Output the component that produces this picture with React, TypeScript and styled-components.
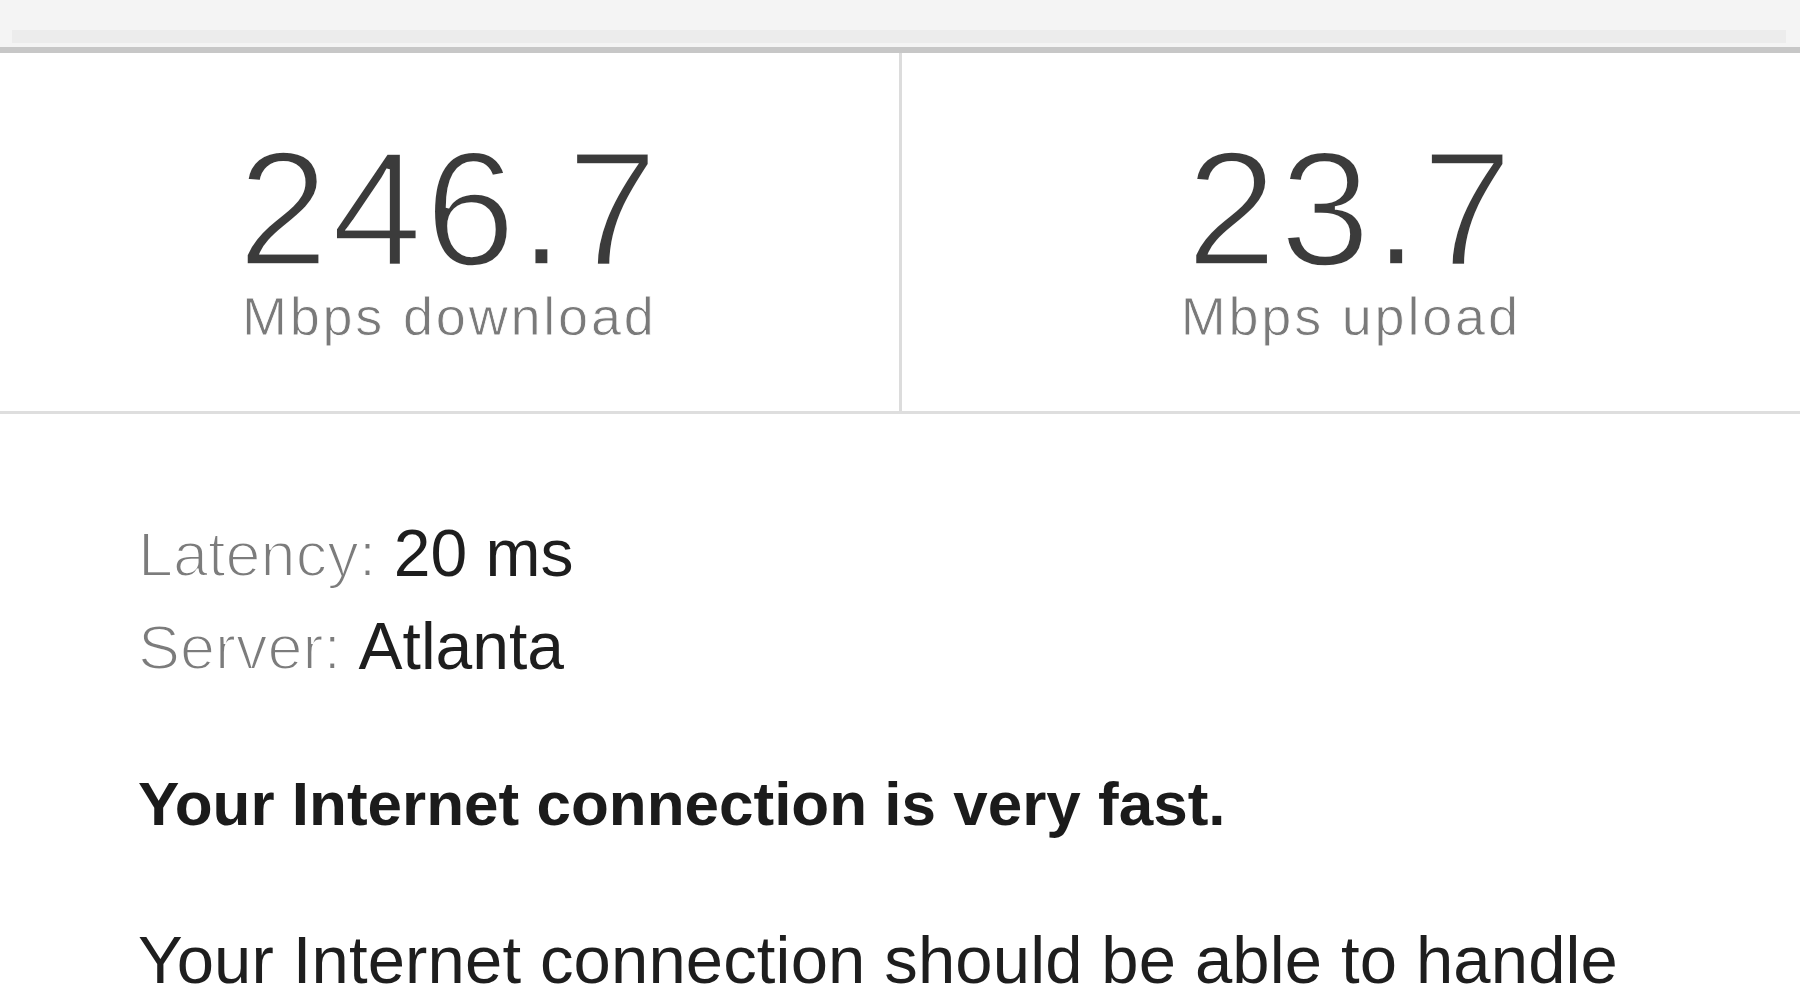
import styled, { createGlobalStyle } from "styled-components";

const GlobalStyle = createGlobalStyle`
    html, body {
        margin: 0;
        padding: 0;
        background: #fff;
    }
    body {
        font-family: "Liberation Sans", Arial, Helvetica, sans-serif;
        color: #1e1e1e;
        overflow: hidden;
    }
`;

const TopBar = styled.header`
    height: 47px;
    background: #f4f4f4;
    border-bottom: 6px solid #c7c7c7;
    display: flex;
    flex-direction: column;
    justify-content: flex-end;
`;

const AddressStrip = styled.div`
    height: 13px;
    margin: 0 14px 4px 12px;
    background: #ececec;
`;

const Stats = styled.section`
    display: grid;
    grid-template-columns: 1fr 3px 1fr;
    border-bottom: 3px solid #dedede;
`;

const Divider = styled.div`
    background: #dcdcdc;
`;

const Stat = styled.div`
    height: 358px;
    padding-top: 83px;
    box-sizing: border-box;
    display: flex;
    flex-direction: column;
    align-items: center;
`;

const StatValue = styled.div`
    font-size: 163px;
    line-height: 0.9;
    letter-spacing: 3px;
    color: #3b3b3b;
    -webkit-text-stroke: 3.5px #fff;
`;

const StatLabel = styled.div`
    margin-top: 8px;
    font-size: 54px;
    line-height: 50px;
    letter-spacing: 2.8px;
    color: #7a7a7a;
    -webkit-text-stroke: 0.8px #fff;
`;

const Info = styled.section`
    padding: 93px 0 0 138px;
`;

const MetaRow = styled.div`
    font-size: 63px;
    line-height: 92px;
    white-space: nowrap;
`;

const MetaLabel = styled.span`
    color: #7c7c7c;
    -webkit-text-stroke: 2px #fff;
`;

const MetaValue = styled.span`
    font-size: 66px;
    color: #1e1e1e;
`;

const Verdict = styled.p`
    margin: 74px 0 0;
    font-size: 62px;
    line-height: 1.2;
    font-weight: 700;
    color: #1b1b1b;
    white-space: nowrap;
`;

const Description = styled.p`
    margin: 79px 0 0;
    font-size: 67px;
    line-height: 1.2;
    letter-spacing: 0.15px;
    color: #1e1e1e;
    white-space: nowrap;
`;

type StatItem = { value: string; unit: string };

const stats: StatItem[] = [
    { value: "246.7", unit: "Mbps download" },
    { value: "23.7", unit: "Mbps upload" },
];

const App = () => {
    return (
        <>
            <GlobalStyle />
            <TopBar>
                <AddressStrip />
            </TopBar>
            <Stats>
                <Stat>
                    <StatValue>{stats[0].value}</StatValue>
                    <StatLabel>{stats[0].unit}</StatLabel>
                </Stat>
                <Divider />
                <Stat>
                    <StatValue>{stats[1].value}</StatValue>
                    <StatLabel>{stats[1].unit}</StatLabel>
                </Stat>
            </Stats>
            <Info>
                <MetaRow>
                    <MetaLabel>Latency: </MetaLabel>
                    <MetaValue>20 ms</MetaValue>
                </MetaRow>
                <MetaRow>
                    <MetaLabel>Server: </MetaLabel>
                    <MetaValue>Atlanta</MetaValue>
                </MetaRow>
                <Verdict>Your Internet connection is very fast.</Verdict>
                <Description>Your Internet connection should be able to handle</Description>
            </Info>
        </>
    );
};

export default App;
